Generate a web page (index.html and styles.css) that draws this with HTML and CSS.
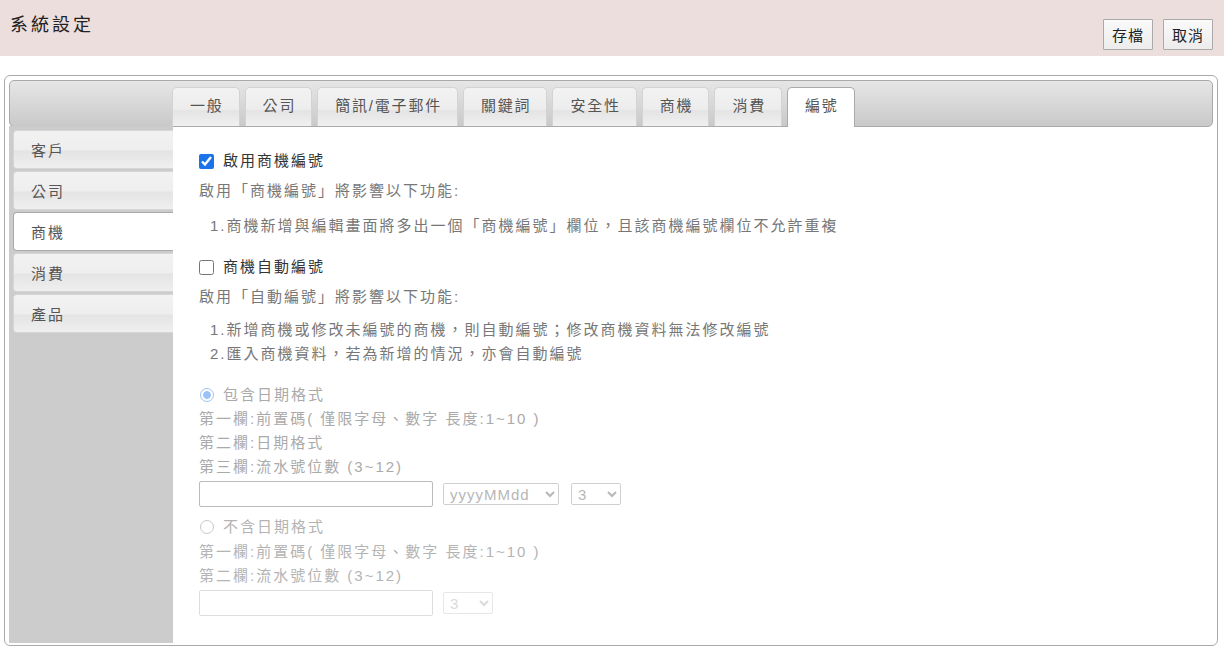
FILE: index.html
```html
<!DOCTYPE html>
<html lang="zh-Hant">
<head>
    <meta charset="UTF-8">
    <meta name="viewport" content="width=device-width, initial-scale=1.0">
    <title>系統設定</title>
    <link rel="stylesheet" href="styles.css">
</head>

<body>
    <div class="header">
        <h1 class="title">系統設定</h1>
        <div class="actions">
            <button class="btn">存檔</button>
            <button class="btn">取消</button>
        </div>
    </div>

    <div class="panel">
        <ul class="tabbar">
            <li class="tab">一般</li>
            <li class="tab">公司</li>
            <li class="tab">簡訊/電子郵件</li>
            <li class="tab">關鍵詞</li>
            <li class="tab">安全性</li>
            <li class="tab">商機</li>
            <li class="tab">消費</li>
            <li class="tab active">編號</li>
        </ul>

        <div class="main">
            <ul class="sidebar">
                <li class="side-item">客戶</li>
                <li class="side-item">公司</li>
                <li class="side-item active">商機</li>
                <li class="side-item">消費</li>
                <li class="side-item">產品</li>
            </ul>

            <div class="content">
                <label class="check-row first">
                    <input type="checkbox" checked> 啟用商機編號
                </label>
                <p class="desc">啟用「商機編號」將影響以下功能:</p>
                <ol class="notes notes-one">
                    <li>1.商機新增與編輯畫面將多出一個「商機編號」欄位，且該商機編號欄位不允許重複</li>
                </ol>

                <label class="check-row second">
                    <input type="checkbox"> 商機自動編號
                </label>
                <p class="desc">啟用「自動編號」將影響以下功能:</p>
                <ol class="notes notes-two">
                    <li>1.新增商機或修改未編號的商機，則自動編號；修改商機資料無法修改編號</li>
                    <li>2.匯入商機資料，若為新增的情況，亦會自動編號</li>
                </ol>

                <div class="format-group">
                    <label class="radio-row">
                        <input class="radio" type="radio" name="fmt" checked disabled> 包含日期格式
                    </label>
                    <p class="hint">第一欄:前置碼( 僅限字母、數字 長度:1~10 )</p>
                    <p class="hint">第二欄:日期格式</p>
                    <p class="hint">第三欄:流水號位數 (3~12)</p>
                    <div class="fields">
                        <input class="text-field" type="text" disabled>
                        <select class="select date-select" disabled>
                            <option>yyyyMMdd</option>
                        </select>
                        <select class="select num-select" disabled>
                            <option>3</option>
                        </select>
                    </div>
                </div>

                <div class="format-group light">
                    <label class="radio-row">
                        <input class="radio" type="radio" name="fmt" disabled> 不含日期格式
                    </label>
                    <p class="hint">第一欄:前置碼( 僅限字母、數字 長度:1~10 )</p>
                    <p class="hint">第二欄:流水號位數 (3~12)</p>
                    <div class="fields">
                        <input class="text-field" type="text" disabled>
                        <select class="select num-select" disabled>
                            <option>3</option>
                        </select>
                    </div>
                </div>
            </div>
        </div>
    </div>
</body>
</html>
```

FILE: styles.css
```css
body {
    font-family: "Liberation Sans", "Noto Sans CJK TC", sans-serif;
    color: #333;
    background-color: #fff;
    margin: 0;
    padding: 0;
}

ul, ol {
    list-style: none;
    margin: 0;
    padding: 0;
}

p {
    margin: 0;
}

/* header strip */
.header {
    height: 56px;
    background-color: #ecdedd;
    display: flex;
    justify-content: space-between;
    box-sizing: border-box;
    padding: 0 11px 0 10px;
}

.title {
    margin: 12px 0 0;
    font-size: 18px;
    font-weight: normal;
    letter-spacing: 3px;
    line-height: 26px;
    color: #222;
}

.actions {
    display: flex;
    gap: 10px;
    margin-top: 19px;
}

.btn {
    height: 31px;
    padding: 0 8px;
    font-family: inherit;
    font-size: 15px;
    letter-spacing: 1px;
    color: #222;
    background: linear-gradient(#fafafa, #ececec);
    border: 1px solid #aaa;
    border-radius: 1px;
}

/* outer panel */
.panel {
    margin: 19px 6px 0 4px;
    height: 571px;
    box-sizing: border-box;
    border: 1px solid #aaa;
    border-radius: 6px;
    padding: 4px 4px 2px;
    display: flex;
    flex-direction: column;
}

.tabbar {
    height: 47px;
    flex-shrink: 0;
    box-sizing: border-box;
    border: 1px solid #aaa;
    border-radius: 5px;
    background: linear-gradient(#e6e6e6, #c9c9c9);
    display: flex;
    align-items: flex-end;
    gap: 5px;
    padding-left: 162px;
    margin-bottom: -1px;
}

.tab {
    height: 39px;
    box-sizing: border-box;
    padding: 0 15px 0 17px;
    font-size: 15px;
    letter-spacing: 1.8px;
    color: #555;
    line-height: 36px;
    border: 1px solid #d3d3d3;
    border-bottom: none;
    border-radius: 5px 5px 0 0;
    background: linear-gradient(#f2f2f2 0%, #ededed 55%, #e4e4e4 60%, #f0f0f0 100%);
}

.tab.active {
    background: #fff;
    border-color: #aaa;
    height: 40px;
    margin-bottom: -1px;
}

.main {
    flex: 1;
    display: flex;
}

.sidebar {
    width: 164px;
    flex-shrink: 0;
    background-color: #ccc;
    padding: 4px 0 0 4px;
    box-sizing: border-box;
    display: flex;
    flex-direction: column;
    gap: 2px;
}

.side-item {
    height: 39px;
    box-sizing: border-box;
    padding-left: 17px;
    font-size: 15px;
    letter-spacing: 2px;
    color: #555;
    line-height: 39px;
    border: 1px solid #d6d6d6;
    border-right: none;
    border-radius: 4px 0 0 4px;
    background: linear-gradient(#f2f2f2 0%, #eeeeee 50%, #e4e4e4 55%, #efefef 100%);
}

.side-item.active {
    background: #fff;
    border-color: #aaa;
}

/* content area */
.content {
    flex: 1;
    padding: 23px 0 0 26px;
    font-size: 15px;
    letter-spacing: 2px;
    line-height: 24px;
}

.check-row,
.radio-row {
    display: flex;
    align-items: center;
    gap: 9px;
    height: 24px;
}

.check-row {
    color: #333;
}

.check-row input {
    width: 15px;
    height: 15px;
    margin: 0;
    accent-color: #1a73e8;
}

.check-row.second {
    margin-top: 17px;
}

.desc {
    margin-top: 6px;
    color: #777;
}

.notes {
    padding-left: 11px;
    color: #777;
}

.notes-one {
    margin-top: 11px;
}

.notes-two {
    margin-top: 9px;
}

.format-group {
    margin-top: 17px;
    color: #aaa;
}

.format-group.light {
    margin-top: 8px;
    color: #b4b4b4;
}

.radio-row {
    gap: 9px;
}

.radio {
    appearance: none;
    width: 14px;
    height: 14px;
    margin: 0 0 0 1px;
    box-sizing: border-box;
    border: 1px solid #c8c8c8;
    border-radius: 50%;
    background: #fff;
}

.radio:checked {
    border-color: #9cc3f5;
    background: radial-gradient(circle, #9cc3f5 0 3.5px, #fff 4.2px);
}

.light .radio-row {
    margin-bottom: 1px;
}

.fields {
    display: flex;
    align-items: center;
    gap: 10px;
    margin-top: 2px;
}

.text-field {
    width: 234px;
    height: 26px;
    box-sizing: border-box;
    border: 1px solid #bbb;
    border-radius: 2px;
    background: #fff;
    margin: 0;
}

.select {
    height: 22px;
    box-sizing: border-box;
    font-family: inherit;
    font-size: 15px;
    letter-spacing: 1px;
    color: #999;
    background: #fff;
    border: 1px solid #bbb;
    border-radius: 2px;
    margin: 0;
    padding: 0 2px;
}

.date-select {
    width: 116px;
}

.num-select {
    width: 50px;
    margin-left: 2px;
}

.light .fields {
    margin-top: 2px;
}

.light .text-field,
.light .select {
    border-color: #ddd;
}

.light .select {
    color: #ccc;
    margin-left: 0;
}
```
